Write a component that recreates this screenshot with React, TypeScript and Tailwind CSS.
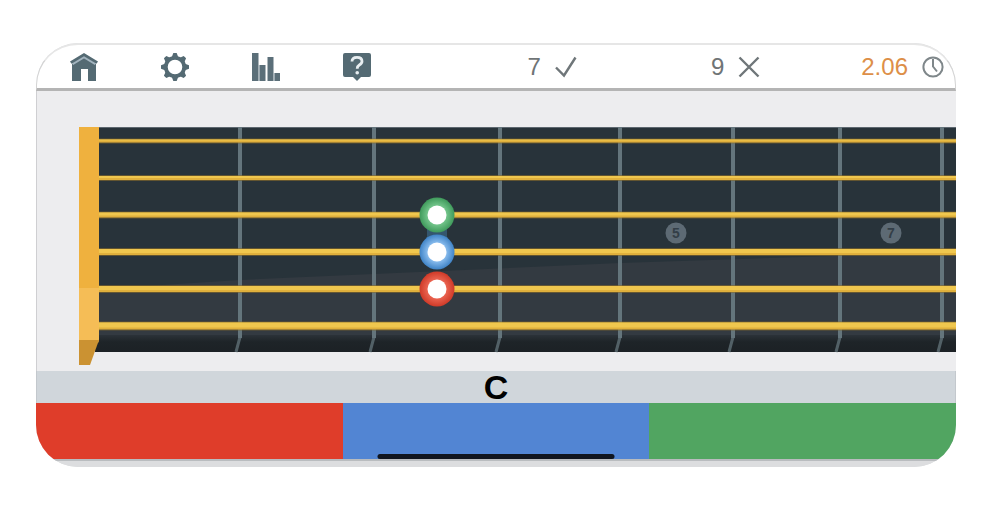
import { useState } from 'react'

const strings = [
  { y: 14, w: 3 },
  { y: 51, w: 4 },
  { y: 88, w: 5 },
  { y: 125, w: 6 },
  { y: 162, w: 6 },
  { y: 199, w: 7 },
]

const frets = [161, 295, 421, 541, 654, 761, 863]

const markers = [
  { x: 597, label: '5' },
  { x: 812, label: '7' },
]

const notes = [
  { y: 88, color: '#3f9a5b', light: '#72c48a' },
  { y: 125, color: '#3f83c6', light: '#86baec' },
  { y: 162, color: '#cf3a28', light: '#ea6350' },
]

const answers = [
  { name: 'Red', style: 'bg-[#df3d2a]' },
  { name: 'Blue', style: 'bg-[#5285d3]' },
  { name: 'Green', style: 'bg-[#51a561]' },
]

const HomeIcon = () => (
  <svg viewBox="0 0 28 28" className="w-7 h-7">
    <path d="M2 11 L14 4 L26 11 V28 H18 V16 H11 V28 H2 Z" fill="#546a73" />
    <path d="M2.5 11 L14 4 L25.5 11" fill="none" stroke="#a3b4bf" strokeWidth="2.6" />
    <path d="M0 8.6 L14 0 L28 8.6 L26.5 10.8 L14 3.2 L1.5 10.8 Z" fill="#546a73" />
  </svg>
)

const GearIcon = () => (
  <svg viewBox="0 0 28 28" className="w-7 h-7">
    <circle cx="14" cy="14" r="9.2" fill="none" stroke="#546a73" strokeWidth="3.8" />
    {[0, 45, 90, 135, 180, 225, 270, 315].map((a) => (
      <path key={a} d="M10.8 4 L12.3 0 H15.7 L17.2 4 Z" fill="#546a73" transform={`rotate(${a} 14 14)`} />
    ))}
  </svg>
)

const StatsIcon = () => (
  <svg viewBox="0 0 28 28" className="w-7 h-7">
    <path d="M0 0 H6.5 V28 H0 Z M8 12 H13.5 V28 H8 Z M15.5 4 H21.5 V28 H15.5 Z M23 20 H28.5 V28 H23 Z" fill="#5b6f79" />
    <path d="M6.5 12 H8 V28 H6.5 Z M21.5 20 H23 V28 H21.5 Z" fill="#9dabb3" />
  </svg>
)

const HelpIcon = () => (
  <svg viewBox="0 0 28 28" className="w-7 h-7">
    <path d="M2 0 H26 Q28 0 28 2 V22 Q28 24 26 24 H18 L14 28 L10 24 H2 Q0 24 0 22 V2 Q0 0 2 0 Z" fill="#546a73" />
    <path d="M9 8.5 Q9 4.3 14 4.3 Q19 4.3 19 8.3 Q19 10.5 16.3 12 Q14.2 13.3 14.2 15.8" fill="none" stroke="#e8eef1" strokeWidth="2.8" />
    <circle cx="14.2" cy="19.8" r="1.8" fill="#e8eef1" />
  </svg>
)

const CheckIcon = () => (
  <svg viewBox="0 0 22 22" className="w-[22px] h-[22px]" fill="none" stroke="#6f7679" strokeWidth="2.4">
    <path d="M1 11.5 L9 19.5 L20.5 1.5" />
  </svg>
)

const CrossIcon = () => (
  <svg viewBox="0 0 22 22" className="w-[22px] h-[22px]" fill="none" stroke="#6f7679" strokeWidth="2.4">
    <path d="M1.5 1.5 L20.5 20.5 M20.5 1.5 L1.5 20.5" />
  </svg>
)

const ClockIcon = () => (
  <svg viewBox="0 0 22 22" className="w-[22px] h-[22px]" fill="none" stroke="#7f878a" strokeWidth="2">
    <circle cx="11" cy="11" r="9.6" />
    <path d="M11 3 V10.5 L15 15.5" />
  </svg>
)

const tools = [
  { name: 'Home', icon: <HomeIcon /> },
  { name: 'Settings', icon: <GearIcon /> },
  { name: 'Statistics', icon: <StatsIcon /> },
  { name: 'Help', icon: <HelpIcon /> },
]

const Fretboard = () => (
  <svg className="block w-full h-[238px]" role="img" aria-label="Fretboard">
    <defs>
      <linearGradient id="bevel" x1="0" y1="0" x2="0" y2="1">
        <stop offset="0" stopColor="#2b3238" />
        <stop offset="0.4" stopColor="#1e2428" />
        <stop offset="1" stopColor="#1c2125" />
      </linearGradient>
      {notes.map((n) => (
        <radialGradient key={n.y} id={`note${n.y}`}>
          <stop offset="0.55" stopColor={n.light} />
          <stop offset="1" stopColor={n.color} />
        </radialGradient>
      ))}
    </defs>

    <rect x="16" y="0" width="100%" height="225" fill="#28333a" />
    <path d="M20 162 L161 153 L541 136 L877 125 H3000 V225 H20 Z" fill="#333a41" />
    <rect x="16" y="208" width="100%" height="17" fill="url(#bevel)" />
    <rect x="16" y="0" width="100%" height="1" fill="#5d676f" />

    {frets.map((x) => (
      <g key={x} stroke="#64757c" fill="none">
        <path d={`M${x} 0 V211`} strokeWidth="4" />
        <path d={`M${x} 210 L${x - 4} 225`} strokeWidth="3" opacity="0.75" />
      </g>
    ))}

    {strings.map((s) => (
      <g key={s.y}>
        <rect x="20" y={s.y - s.w / 2 - 1} width="100%" height={s.w + 2} fill="#8a6d2a" opacity="0.6" />
        <rect x="20" y={s.y - s.w / 2} width="100%" height={s.w} fill="#e0b03c" />
        <rect x="20" y={s.y - s.w / 2} width="100%" height={s.w - 2} fill="#f0c74e" />
      </g>
    ))}

    {markers.map((m) => (
      <g key={m.label}>
        <circle cx={m.x} cy="106" r="10.5" fill="#5d6a74" />
        <text x={m.x} y="111" textAnchor="middle" fontSize="14" fontWeight="700" fill="#333e47">{m.label}</text>
      </g>
    ))}

    <path d="M0 0 H20 V212 L19 216 H0 Z" fill="#efb13e" />
    <path d="M0 161 H20 V212 L19 216 H0 Z" fill="#f5bd56" />
    <path d="M0 213 H20 L11 238 H0 Z" fill="#cb9232" />

    <rect x="348" y="98" width="20" height="20" fill="#34566e" />
    {notes.map((n) => (
      <g key={n.y}>
        <circle cx="358" cy={n.y} r="17.5" fill={`url(#note${n.y})`} />
        <circle cx="358" cy={n.y} r="9.5" fill="#fff" />
      </g>
    ))}
  </svg>
)

const App = () => {
  const [right] = useState(7)
  const [wrong] = useState(9)

  return (
    <div className="w-full min-h-screen bg-white px-9 pt-[43px] pr-11 font-['Liberation_Sans',sans-serif]">
      <main className="w-full overflow-hidden rounded-[42px] bg-[#dcdddf]">

        <header className="h-[48px] flex items-center bg-white border-t-2 border-x border-b-3 rounded-t-[42px] border-t-[#e6e6e6] border-x-[#d4d4d4] border-b-[#b4b4b4]">
          <nav className="flex gap-[63px] pl-[33px]">
            {tools.map((t) => (
              <button key={t.name} aria-label={t.name} className="cursor-pointer">{t.icon}</button>
            ))}
          </nav>

          <div className="ml-auto w-[60%] grid grid-cols-3 text-2xl text-[#6f7476]">
            <div className="flex items-center justify-end gap-[14px] pr-[11px]">
              <span>{right}</span>
              <CheckIcon />
            </div>
            <div className="flex items-center justify-end gap-[14px] pr-[11px]">
              <span>{wrong}</span>
              <CrossIcon />
            </div>
            <div className="flex items-center justify-end gap-[14px] pr-[11px]">
              <span className="text-[#dd8f48]">2.06</span>
              <ClockIcon />
            </div>
          </div>
        </header>

        <section className="pt-9 pb-[6px] pl-[42px] border-l border-[#cfcfd2] bg-[#ededef]">
          <Fretboard />
        </section>

        <h1 className="h-8 flex items-center justify-center border-x border-[#c3c8cd] bg-[#d0d6db] text-[34px] leading-8 font-bold text-black">C</h1>

        <div className="relative grid grid-cols-3">
          {answers.map((a) => (
            <button key={a.name} aria-label={a.name} className={`h-14 cursor-pointer ${a.style}`}></button>
          ))}
          <span className="absolute bottom-0 left-1/2 w-[237px] h-[5px] -translate-x-1/2 rounded-full bg-[#10151f]"></span>
        </div>
        <div className="h-2 border-t-2 border-[#b9bcbf] bg-[#dcdddf]"></div>

      </main>
    </div>
  )
}

export default App
